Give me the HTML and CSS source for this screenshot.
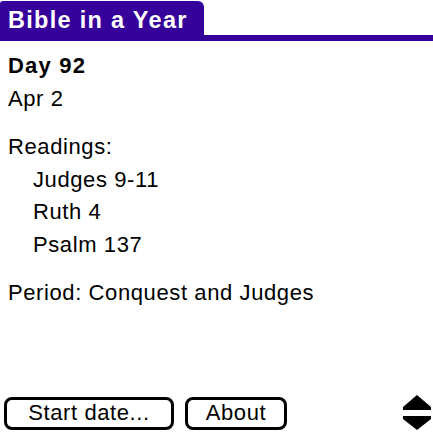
FILE: index.html
```html
<!DOCTYPE html>
<html>
<head>
<meta charset="utf-8">
<link rel="stylesheet" href="styles.css">
</head>
<body>
<div class="screen">
  <div class="titlebar">
    <div class="tab">Bible in a Year</div>
  </div>
  <div class="content">
    <div class="line bold">Day 92</div>
    <div class="line">Apr 2</div>
    <div class="gap"></div>
    <div class="line">Readings:</div>
    <div class="line indent">Judges 9-11</div>
    <div class="line indent">Ruth 4</div>
    <div class="line indent">Psalm 137</div>
    <div class="gap"></div>
    <div class="line">Period: Conquest and Judges</div>
  </div>
  <div class="footer">
    <div class="buttons">
      <div class="btn btn-start">Start date...</div>
      <div class="btn btn-about">About</div>
    </div>
    <svg class="scroll" width="30" height="36" viewBox="0 0 30 36">
      <polygon points="15,0 1,12 1,15 29,15 29,12" fill="#000"/>
      <polygon points="1,21 29,21 29,24 15,35 1,24" fill="#000"/>
    </svg>
  </div>
</div>
</body>
</html>
```
FILE: styles.css
```css
html, body {
  margin: 0;
  padding: 0;
  background: #fff;
}
.screen {
  width: 433px;
  height: 436px;
  display: flex;
  flex-direction: column;
  font-family: "Liberation Sans", Arial, sans-serif;
  font-size: 22px;
  color: #000;
}
.titlebar {
  display: flex;
  border-bottom: 6px solid #36009a;
}
.tab {
  margin-top: 1px;
  width: 196px;
  height: 34px;
  padding-left: 8px;
  background: #36009a;
  color: #fff;
  font-weight: bold;
  font-size: 23.5px;
  letter-spacing: 1.3px;
  line-height: 38px;
  border-radius: 3px 6px 0 0;
  white-space: nowrap;
}
.content {
  flex: 1;
  padding: 9px 0 0 8px;
}
.line {
  height: 32.5px;
  line-height: 32.5px;
  white-space: nowrap;
  letter-spacing: 0.6px;
}
.bold {
  font-weight: bold;
  letter-spacing: 1.2px;
}
.indent {
  padding-left: 25px;
}
.gap {
  height: 16px;
}
.footer {
  display: flex;
  align-items: center;
  justify-content: space-between;
  padding: 0 1px 5px 4px;
}
.buttons {
  display: flex;
  gap: 11px;
}
.btn {
  box-sizing: border-box;
  height: 33px;
  border: 3px solid #000;
  border-radius: 8px;
  display: flex;
  align-items: center;
  justify-content: center;
  letter-spacing: 0.6px;
  white-space: nowrap;
}
.btn-start {
  width: 170px;
}
.btn-about {
  width: 102px;
}
.scroll {
  display: block;
}
```
